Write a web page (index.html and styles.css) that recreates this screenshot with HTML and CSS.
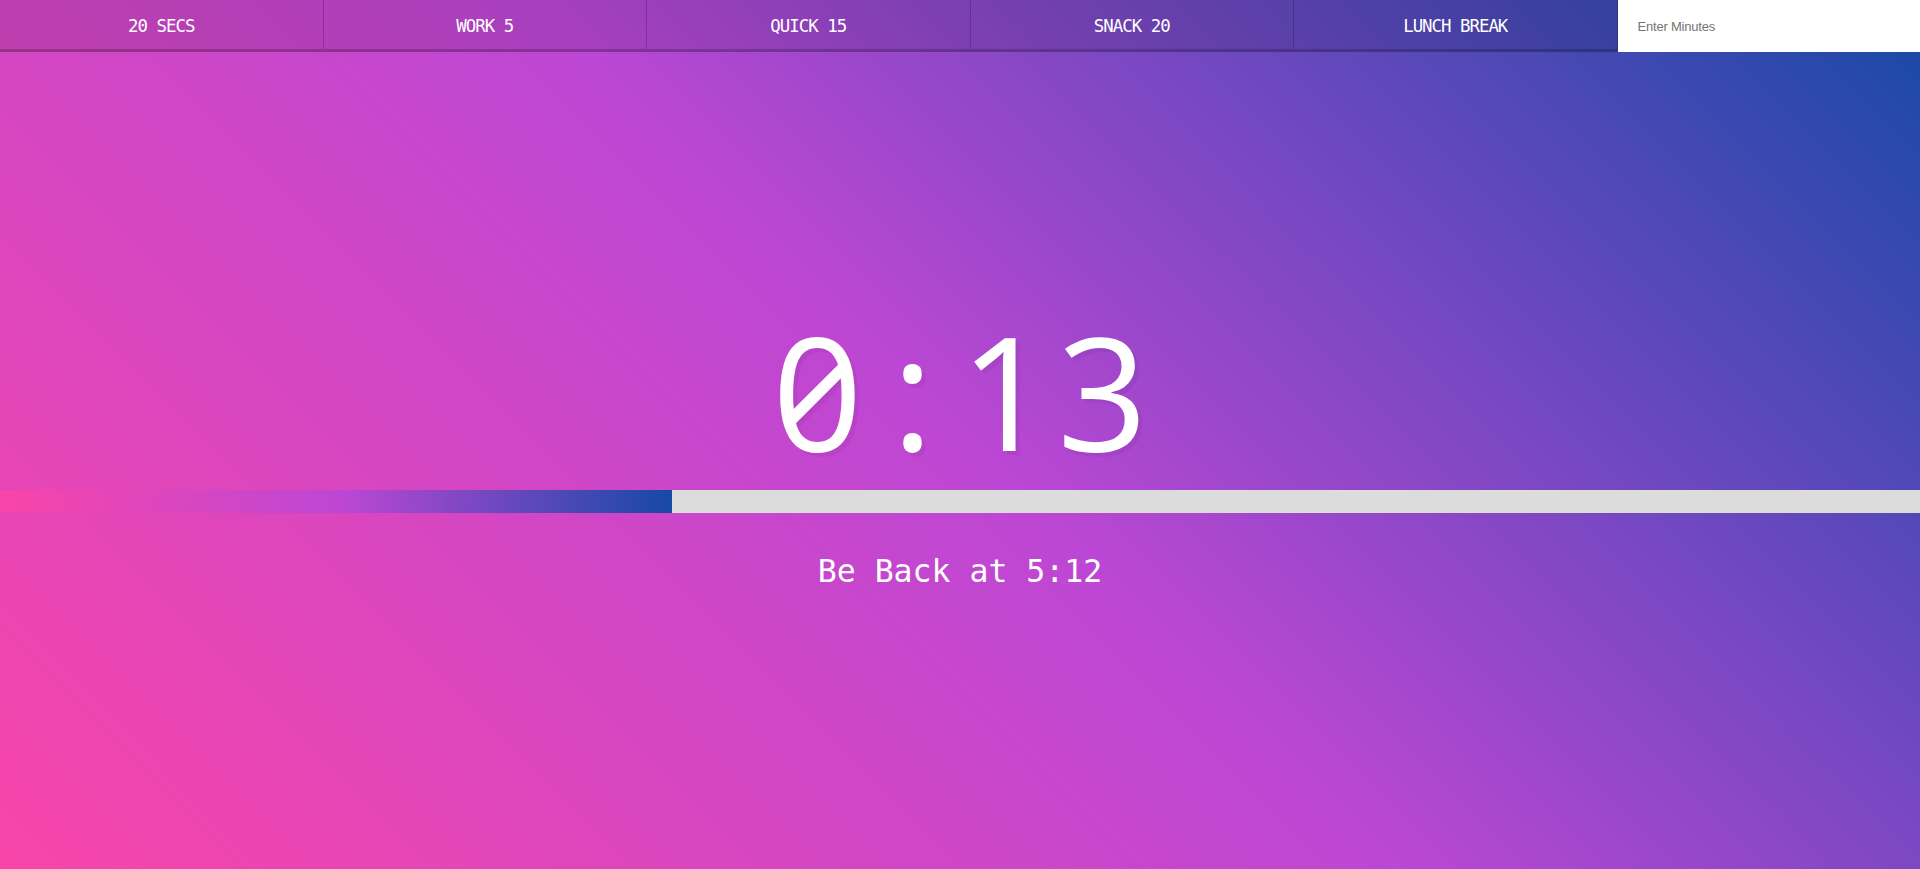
FILE: index.html
```html
<!DOCTYPE html>
<html lang="en">
<head>
<meta charset="UTF-8">
<title>Countdown Timer</title>
<link rel="stylesheet" href="styles.css">
</head>
<body>
<div class="timer">
  <div class="timer__controls">
    <button class="timer__button">20 Secs</button>
    <button class="timer__button">Work 5</button>
    <button class="timer__button">Quick 15</button>
    <button class="timer__button">Snack 20</button>
    <button class="timer__button">Lunch Break</button>
    <form class="timer__form">
      <input class="timer__input" type="text" name="minutes" placeholder="Enter Minutes">
    </form>
  </div>
  <div class="display">
    <h1 class="display__time-left"><span class="ch">0</span><span class="ch">:</span><span class="ch ch--one">1</span><span class="ch">3</span></h1>
    <div class="progress"><div class="progress__fill" style="width: 35%"></div></div>
    <p class="display__end-time">Be Back at 5:12</p>
  </div>
</div>
</body>
</html>
```

FILE: styles.css
```css
html {
  box-sizing: border-box;
}
*, *::before, *::after {
  box-sizing: inherit;
}
body {
  margin: 0;
  text-align: center;
  font-family: "DejaVu Sans Mono", monospace;
}
.timer {
  display: flex;
  flex-direction: column;
  height: 100vh;
  background: linear-gradient(45deg, #f845a9 0%, #bc47d4 50%, #1649a7 100%);
}
.timer__controls {
  display: flex;
  height: 52px;
}
.timer__button {
  flex: 1;
  border: 0;
  margin: 0;
  padding: 2px 10px 0;
  cursor: pointer;
  color: #fff;
  font-family: "DejaVu Sans Mono", monospace;
  font-size: 17.4px;
  letter-spacing: -1px;
  text-transform: uppercase;
  background: rgba(0, 0, 0, 0.1);
  border-bottom: 3px solid rgba(0, 0, 0, 0.2);
  border-right: 1px solid rgba(0, 0, 0, 0.2);
}
.timer__form {
  flex: 1;
  display: flex;
  margin: 0;
}
.timer__input {
  flex: 1;
  min-width: 0;
  border: 0;
  margin: 0;
  padding: 0 20px;
  height: 52px;
  background: #fff;
  font-family: "Liberation Sans", Arial, sans-serif;
  font-size: 13px;
  letter-spacing: -0.2px;
  outline: none;
}
.timer__input::placeholder {
  color: #757575;
}
.display {
  flex: 1;
  display: flex;
  flex-direction: column;
  align-items: stretch;
  justify-content: center;
}
.display__time-left {
  display: flex;
  justify-content: center;
  margin: 0;
  font-family: "Open Sans", sans-serif;
  font-weight: 450;
  font-stretch: 89%;
  font-feature-settings: "zero" 1, "tnum" 1;
  font-size: 158px;
  line-height: 1;
  color: #fff;
  text-shadow: 4px 4px 0 rgba(0, 0, 0, 0.05);
}
.ch {
  width: 95px;
  text-align: center;
}
.ch--one {
  padding-right: 8px;
}
.progress {
  height: 23px;
  margin-top: 21px;
  background: #dcdcdc;
}
.progress__fill {
  height: 100%;
  background: linear-gradient(to right, #f845a9 0%, #bc47d4 51%, #1649a7 100%);
}
.display__end-time {
  margin: 40px 0 19px;
  font-size: 31.5px;
  line-height: 1.2;
  color: #fff;
}
```
